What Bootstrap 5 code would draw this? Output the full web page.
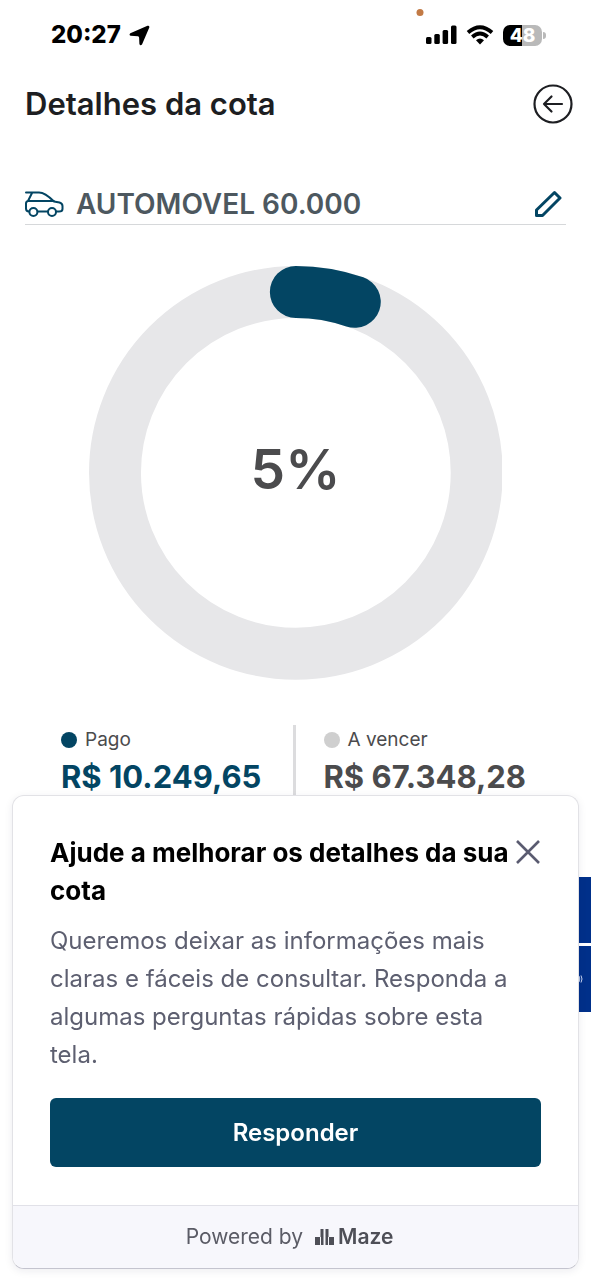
<!DOCTYPE html>
<html lang="pt-BR">
<head>
<meta charset="utf-8">
<meta name="viewport" content="width=device-width, initial-scale=1">
<title>Detalhes da cota</title>
<link href="https://cdn.jsdelivr.net/npm/bootstrap@5.3.0/dist/css/bootstrap.min.css" rel="stylesheet">
<style>
  :root { --brand: #034563; --ink: #4b4b4d; }
  body { font-family: Inter, "Liberation Sans", sans-serif; color: #1d1e22; background: #fff; }
  svg { display: block; flex: none; }
  .page { min-height: 100vh; overflow: hidden; }
  .status { height: 70px; padding: 0 45px 0 51px; color: #000; }
  .clock { font-size: 24px; font-weight: 800; line-height: 28px; }
  .battery { width: 39px; height: 21px; border-radius: 7px; background: linear-gradient(90deg, #000 48%, #b9b9b9 48%); color: #fff; font-size: 19px; font-weight: 800; line-height: 21px; }
  .battery-tip { width: 3px; height: 7px; margin-left: 1px; border-radius: 0 4px 4px 0; background: #b9b9b9; }
  .mic-dot { top: 9px; left: 71%; width: 7px; height: 7px; background: #c27a45; transform: translateX(-50%); }
  .page-head { padding: 12px 18px 0 25px; }
  .page-title { font-size: 31px; font-weight: 600; line-height: 44px; }
  .plan { margin: 62px 25px 0; padding-bottom: 4px; border-bottom: 1px solid #d6d8da; }
  .plan-name { font-size: 28px; font-weight: 600; line-height: 32px; margin-left: 12px; color: #4d585f; }
  .donut { width: 70%; margin: 41px auto 0; }
  .donut-label { font-size: 55px; font-weight: 600; line-height: 64px; color: var(--ink); padding-bottom: 8px; }
  .totals { margin: 45px 36px 0 61px; }
  .totals-due { border-left: 3px solid #dcdcde; padding-left: 28px; }
  .totals-tag { font-size: 19px; line-height: 30px; color: var(--ink); }
  .totals-value { font-size: 31px; font-weight: 700; line-height: 36px; margin-top: 4px; white-space: nowrap; color: var(--ink); }
  .legend { width: 16px; height: 16px; background: #cfcfcf; }
  .paid .totals-value { color: var(--brand); }
  .paid .legend { background: var(--brand); }
  .tile { width: 40px; height: 66px; background: #00308a; color: #c9d6f2; padding-right: 8px; }
  .tiles { margin-top: 82px; gap: 3px; }
  .survey { left: 12px; right: 12px; bottom: 11px; background: #fff; border: 1px solid #e2e2e6; border-bottom-color: #c4c4cf; border-radius: 12px; box-shadow: 0 2px 8px rgba(30,30,60,.08); }
  .survey-body { padding: 38px 37px; }
  .survey-title { font-size: 26px; font-weight: 700; line-height: 38px; color: #000; margin-right: -12px; }
  .survey-text { font-size: 24px; line-height: 38px; color: #5d5f70; margin-top: 12px; padding-right: 24px; }
  .survey-btn { height: 69px; margin-top: 24px; border-radius: 6px; background: var(--brand); color: #fff; font-size: 24px; font-weight: 600; }
  .survey-btn:hover { background: #02384f; color: #fff; }
  .survey-close { top: 43px; right: 37px; }
  .survey-foot { height: 63px; padding-right: 12px; background: #f7f7fc; border-top: 1px solid #e1e1e8; border-radius: 0 0 12px 12px; font-size: 21px; color: #5b5c66; }
  .maze-mark { margin: 0 3px 0 12px; }
  .maze { font-weight: 600; color: #4e4f57; }
</style>
</head>
<body>
<div class="page position-relative">
  <div class="status position-relative d-flex align-items-center justify-content-between">
    <div class="d-flex align-items-center gap-2">
      <span class="clock">20:27</span>
      <svg width="21" height="21" viewBox="0 0 21 21" aria-hidden="true"><path d="M18.500.700 1.300 8.300Q-.3 10 1.500 10.700L9 11.200Q10 11.400 10.100 12.400L10.400 19Q11.300 21.200 13 19.400L20.300 2.500Q20.700.300 18.500.700Z" fill="#000"/></svg>
    </div>
    <span class="mic-dot position-absolute rounded-circle"></span>
    <div class="d-flex align-items-center">
      <svg class="me-2" width="32" height="20" viewBox="0 0 32 20" aria-hidden="true"><g fill="#000"><rect x="1" y="12" width="5.500" height="7" rx="1.500"/><rect x="9.300" y="9" width="5.500" height="10" rx="1.500"/><rect x="17.600" y="5" width="5.500" height="14" rx="1.500"/><rect x="26" y="0.500" width="5.500" height="18.500" rx="1.500"/></g></svg>
      <svg class="me-2" width="30" height="20" viewBox="0 0 30 20" aria-hidden="true"><g fill="none" stroke="#000" stroke-width="3.800"><path d="M3 7.500Q15-3 27 7.500"/><path d="M7.300 12Q15 5.200 22.700 12"/></g><path d="M11 15.200Q15 12 19 15.200L15 19.400Z" fill="#000"/></svg>
      <span class="battery text-center">48</span><span class="battery-tip"></span>
    </div>
  </div>

  <header class="page-head d-flex align-items-center justify-content-between">
    <h1 class="page-title m-0">Detalhes da cota</h1>
    <button class="btn p-0 border-0" type="button" aria-label="Voltar">
      <svg width="40" height="40" viewBox="0 0 40 40" fill="none" stroke="#1d1e22" stroke-width="2.200" stroke-linecap="round" stroke-linejoin="round"><circle cx="20" cy="20" r="18.500"/><path d="M29 20H11M18.500 12.500 11 20l7.500 7.500"/></svg>
    </button>
  </header>

  <main>
    <section class="plan d-flex align-items-center">
      <svg width="39" height="26" viewBox="0 0 39 26" fill="none" stroke="#034563" stroke-width="2" stroke-linecap="round" stroke-linejoin="round" aria-hidden="true"><path d="M1 1.500H14Q20 1.500 29 10.500L34.500 11.500Q37.500 12.500 37.500 15V18Q37.500 20.500 34 20.500H31.500M22.500 20.500H12.800M4 20.500Q1 20.500 1 17.500V12.500Q1 10.500 3 10L7 2M3 10H29"/><circle cx="8.400" cy="21" r="4"/><circle cx="27" cy="21" r="4"/></svg>
      <h2 class="plan-name my-0 flex-grow-1">AUTOMOVEL 60.000</h2>
      <button class="btn p-0 border-0 me-1" type="button" aria-label="Editar nome">
        <svg width="28" height="28" viewBox="0 0 28 28" fill="none" stroke="#034563" stroke-width="3" stroke-linejoin="round"><path d="M2.500 20 20.500 2.500 26 8 8.500 25.500H2.500Z"/></svg>
      </button>
    </section>

    <section class="donut position-relative">
      <svg class="w-100 h-auto" viewBox="0 0 414 414" fill="none" stroke-width="52" role="img" aria-label="5% pago"><circle cx="207" cy="207" r="181" stroke="#e7e7e9"/><path d="M207 26A181 181 0 0 1 266 35.900" stroke="#034563" stroke-linecap="round"/></svg>
      <div class="donut-label position-absolute top-0 start-0 w-100 h-100 d-flex align-items-center justify-content-center">5%</div>
    </section>

    <section class="totals row g-0">
      <div class="paid col">
        <div class="totals-tag d-flex align-items-center gap-2"><span class="legend rounded-circle"></span>Pago</div>
        <div class="totals-value">R$ 10.249,65</div>
      </div>
      <div class="totals-due col">
        <div class="totals-tag d-flex align-items-center gap-2"><span class="legend rounded-circle"></span>A vencer</div>
        <div class="totals-value">R$ 67.348,28</div>
      </div>
    </section>

    <section class="tiles d-flex flex-column align-items-end" aria-hidden="true">
      <div class="tile"></div>
      <div class="tile d-flex align-items-center justify-content-end"><svg width="8" height="8" viewBox="0 0 8 8" fill="none" stroke="currentColor"><path d="M4 1Q5.500 4 4 7M6 .500Q8 4 6 7.500"/></svg></div>
    </section>
  </main>

  <div class="survey position-fixed" role="dialog" aria-labelledby="survey-title">
    <div class="survey-body">
      <h2 class="survey-title mb-0" id="survey-title">Ajude a melhorar os detalhes da sua cota</h2>
      <p class="survey-text mb-0">Queremos deixar as informações mais claras e fáceis de consultar. Responda a algumas perguntas rápidas sobre esta tela.</p>
      <button class="survey-btn btn w-100 border-0" type="button">Responder</button>
    </div>
    <button class="survey-close btn p-0 border-0 position-absolute" type="button" aria-label="Fechar">
      <svg width="26" height="26" viewBox="0 0 26 26" fill="none" stroke="#5a5b70" stroke-width="2.600"><path d="M2 2 24 24M24 2 2 24"/></svg>
    </button>
    <div class="survey-foot d-flex align-items-center justify-content-center">
      <span>Powered by</span>
      <svg class="maze-mark" width="20" height="18" viewBox="0 0 20 18" fill="#4e4f57" aria-hidden="true"><path d="M0 9h5v8H0zM5.500 1h3v8h-3zM6 9h2.500v8H6zM10.500 1h3v8h-3zM10.500 9H13v8h-2.500zM14 9h5v8h-5z"/></svg>
      <span class="maze">Maze</span>
    </div>
  </div>
</div>
<script src="https://cdn.jsdelivr.net/npm/bootstrap@5.3.0/dist/js/bootstrap.bundle.min.js"></script>
</body>
</html>
